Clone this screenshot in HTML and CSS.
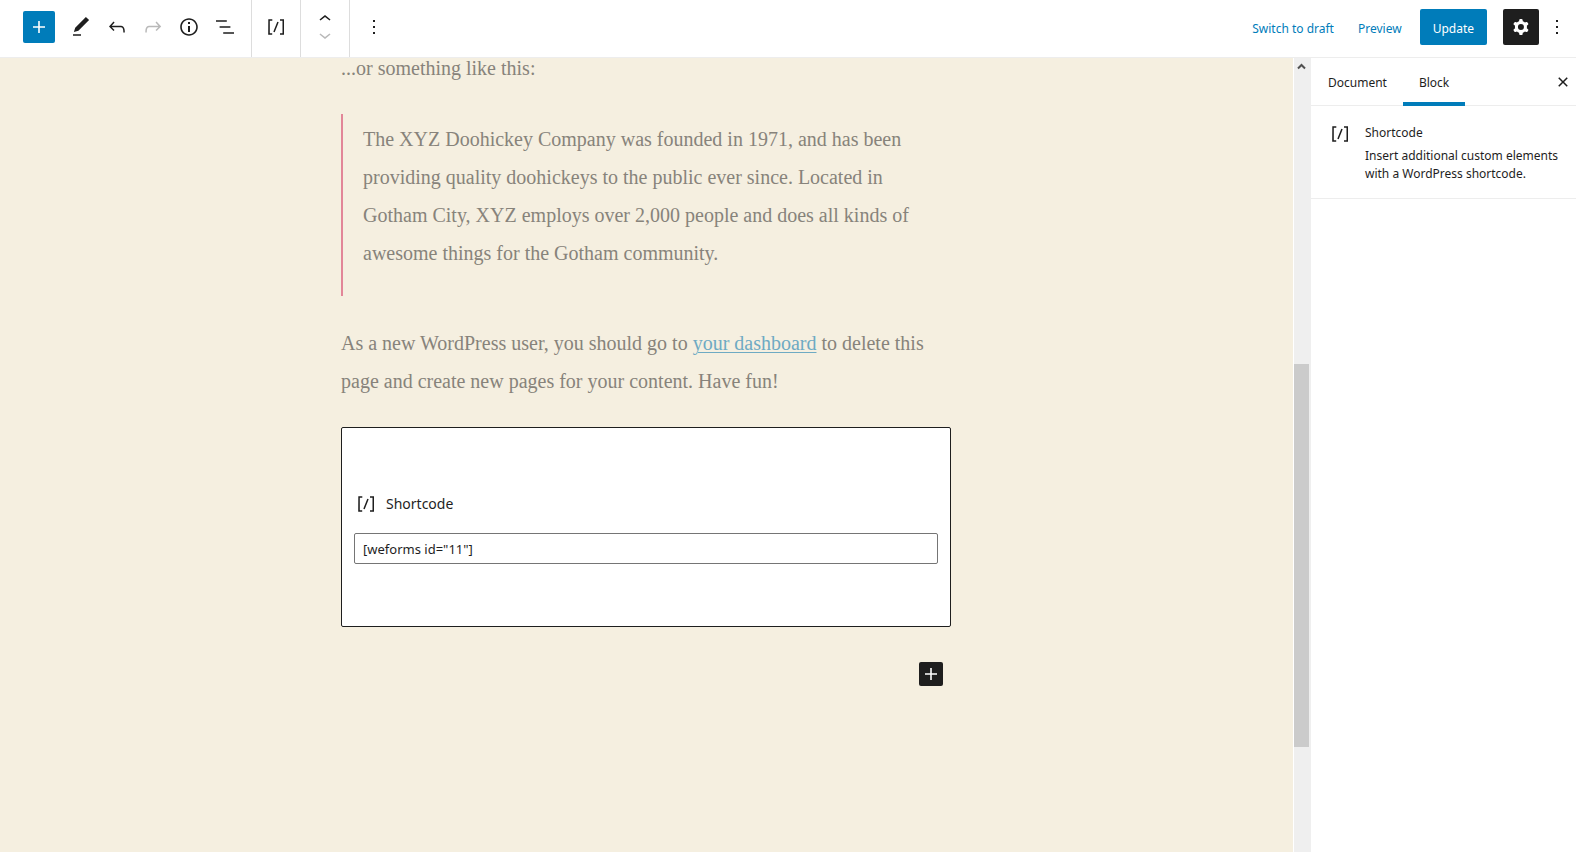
FILE: index.html
```html
<!DOCTYPE html>
<html lang="en">
<head>
<meta charset="utf-8">
<title>Edit Page</title>
<link rel="stylesheet" href="styles.css">
</head>
<body>
<svg class="sprite" aria-hidden="true">
  <symbol id="plus" viewBox="0 0 24 24"><path d="M18 11.2h-5.2V6h-1.6v5.2H6v1.6h5.2V18h1.6v-5.2H18z"/></symbol>
  <symbol id="shortcode" viewBox="0 0 24 24"><path d="M16 4.2v1.5h2.5v12.5H16v1.5h4V4.2h-4zM4.2 19.8h4v-1.5H5.8V5.8h2.5V4.2h-4l-.1 15.6zm5.1-3.1l1.4.6 4-10-1.4-.6-4 10z"/></symbol>
  <symbol id="more" viewBox="0 0 24 24"><path d="M13 19h-2v-2h2v2zm0-6h-2v-2h2v2zm0-6h-2V5h2v2z"/></symbol>
</svg>
<header class="header">
  <div class="tools">
    <button class="inserter" aria-label="Add block"><svg class="icon"><use href="#plus"/></svg></button>
    <div class="tool-group">
      <button class="tool" aria-label="Modes"><svg class="icon" viewBox="0 0 24 24"><path d="M20.1 5.1L16.9 2 6.2 12.7l-1.3 4.4 4.5-1.3L20.1 5.1zM4 20.8h8v-1.5H4v1.5z"/></svg></button>
      <button class="tool" aria-label="Undo"><svg class="icon" viewBox="0 0 24 24"><path d="M18.3 11.7c-.6-.6-1.4-.9-2.3-.9H6.7l2.9-3.3-1.1-1-4.5 5L8.5 16l1-1-2.7-2.7H16c.5 0 .9.2 1.3.5 1 1 1 3.4 1 4.5v.3h1.5v-.2c0-1.5 0-4.3-1.5-5.7z"/></svg></button>
      <button class="tool" aria-label="Redo" disabled><svg class="icon" viewBox="0 0 24 24"><path d="M15.6 6.5l-1.1 1 2.9 3.3H8c-.9 0-1.7.3-2.3.9-1.4 1.5-1.4 4.2-1.4 5.6v.2h1.5v-.3c0-1.1 0-3.5 1-4.5.3-.3.7-.5 1.3-.5h9.2L14.5 15l1.1 1.1 4.6-4.6-4.6-5z"/></svg></button>
      <button class="tool" aria-label="Content structure"><svg class="icon" viewBox="0 0 24 24"><path d="M12 3.2c-4.8 0-8.8 3.9-8.8 8.8 0 4.8 3.9 8.8 8.8 8.8 4.8 0 8.8-3.9 8.8-8.8 0-4.8-4-8.8-8.8-8.8zm0 16c-4 0-7.2-3.3-7.2-7.2C4.8 8 8 4.8 12 4.8s7.2 3.3 7.2 7.2c0 4-3.2 7.2-7.2 7.2zM11 17h2v-6h-2v6zm0-8h2V7h-2v2z"/></svg></button>
      <button class="tool" aria-label="Block navigation"><svg class="icon" viewBox="0 0 24 24"><path d="M13.8 5.2H3v1.5h10.8V5.2zm-3.6 12v1.5H21v-1.5H10.2zm7.2-6H6.6v1.5h10.8v-1.5z"/></svg></button>
    </div>
    <div class="block-toolbar">
      <div class="segment"><button class="tool" aria-label="Shortcode"><svg class="icon"><use href="#shortcode"/></svg></button></div>
      <div class="segment movers">
        <button class="mover" aria-label="Move up"><svg class="icon" viewBox="0 0 24 24"><path d="M6.5 12.4L12 8l5.5 4.4-.9 1.2L12 10l-4.500 3.600-1-1.200z"/></svg></button>
        <button class="mover" aria-label="Move down" disabled><svg class="icon" viewBox="0 0 24 24"><path d="M17.5 11.6L12 16l-5.5-4.4.9-1.2L12 14l4.5-3.6 1 1.2z"/></svg></button>
      </div>
      <div class="segment"><button class="tool" aria-label="More options"><svg class="icon"><use href="#more"/></svg></button></div>
    </div>
  </div>
  <div class="actions">
    <button class="text-button">Switch to draft</button>
    <button class="text-button">Preview</button>
    <button class="update">Update</button>
    <div class="end-tools">
      <button class="settings" aria-label="Settings"><svg class="icon" viewBox="0 0 24 24"><path fill-rule="evenodd" d="M10.289 4.836A1 1 0 0111.275 4h1.306a1 1 0 01.987.836l.244 1.466c.787.26 1.503.679 2.108 1.218l1.393-.522a1 1 0 011.216.437l.653 1.13a1 1 0 01-.23 1.273l-1.148.944a6.025 6.025 0 010 2.435l1.149.946a1 1 0 01.23 1.272l-.653 1.13a1 1 0 01-1.216.437l-1.394-.522c-.605.54-1.32.958-2.108 1.218l-.244 1.466a1 1 0 01-.987.836h-1.306a1 1 0 01-.986-.836l-.244-1.466a5.995 5.995 0 01-2.108-1.218l-1.394.522a1 1 0 01-1.217-.436l-.653-1.131a1 1 0 01.23-1.272l1.149-.946a6.026 6.026 0 010-2.435l-1.148-.944a1 1 0 01-.23-1.272l.653-1.131a1 1 0 011.217-.437l1.393.522a5.994 5.994 0 012.108-1.218l.244-1.466zM14.929 12a3 3 0 11-6 0 3 3 0 016 0z"/></svg></button>
      <button class="tool" aria-label="More tools"><svg class="icon"><use href="#more"/></svg></button>
    </div>
  </div>
</header>
<div class="workspace">
  <main class="canvas">
    <div class="content">
      <p class="paragraph lead">...or something like this:</p>
      <blockquote class="quote">The XYZ Doohickey Company was founded in 1971, and has been<br>providing quality doohickeys to the public ever since. Located in<br>Gotham City, XYZ employs over 2,000 people and does all kinds of<br>awesome things for the Gotham community.</blockquote>
      <p class="paragraph">As a new WordPress user, you should go to <a class="link" href="#dashboard">your dashboard</a> to delete this<br>page and create new pages for your content. Have fun!</p>
      <section class="shortcode-block">
        <label class="shortcode-label" for="code"><svg class="icon"><use href="#shortcode"/></svg>Shortcode</label>
        <input class="shortcode-input" id="code" type="text" value='[weforms id="11"]'>
      </section>
      <div class="appender"><button class="append" aria-label="Add block"><svg class="icon"><use href="#plus"/></svg></button></div>
    </div>
  </main>
  <div class="scrollbar" aria-hidden="true">
    <svg class="scroll-arrow" viewBox="0 0 9 7"><path d="M1 5.500L4.500 2L8 5.500" fill="none" stroke="#505050" stroke-width="2"/></svg>
    <div class="scroll-before"></div>
    <div class="scroll-thumb"></div>
    <div class="scroll-after"></div>
  </div>
  <aside class="sidebar">
    <div class="tabs">
      <button class="tab">Document</button>
      <button class="tab tab-active">Block</button>
      <button class="close" aria-label="Close settings"><svg class="icon" viewBox="0 0 24 24"><path d="M12 13.060l3.712 3.713 1.061-1.060L13.061 12l3.712-3.712-1.060-1.060L12 10.938 8.288 7.227l-1.061 1.060L10.939 12l-3.712 3.712 1.060 1.061L12 13.061z"/></svg></button>
    </div>
    <section class="card">
      <svg class="icon"><use href="#shortcode"/></svg>
      <div class="card-text">
        <h2 class="card-title">Shortcode</h2>
        <p class="card-description">Insert additional custom elements with a WordPress shortcode.</p>
      </div>
    </section>
  </aside>
</div>
</body>
</html>
```
FILE: styles.css
```css
* { box-sizing: border-box; }

body {
  margin: 0;
  height: 100vh;
  display: flex;
  flex-direction: column;
  overflow: hidden;
  background: #fff;
  color: #1e1e1e;
  font: 12px/18px "Noto Sans", sans-serif;
}

button {
  display: flex;
  align-items: center;
  justify-content: center;
  margin: 0;
  padding: 0;
  border: 0;
  border-radius: 2px;
  background: none;
  color: inherit;
  font: inherit;
  white-space: nowrap;
}

button:disabled { color: #b9b9b9; }

.sprite { display: none; }

.icon {
  display: block;
  flex: none;
  width: 24px;
  height: 24px;
  fill: currentColor;
}

.header {
  display: flex;
  justify-content: space-between;
  flex: none;
  height: 58px;
  padding: 0 1px 0 23px;
  border-bottom: 1px solid #ededed;
}

.tools, .tool-group, .block-toolbar, .actions, .end-tools { display: flex; }

.tools { gap: 8px; }
.tool-group { align-items: center; height: 54px; }

.inserter {
  width: 32px;
  height: 32px;
  margin-top: 11px;
  background: #007cba;
  color: #fff;
}

.tool { width: 36px; height: 36px; }

.segment {
  display: flex;
  align-items: center;
  justify-content: center;
  width: 49px;
  padding-bottom: 3px;
  border-left: 1px solid #ddd;
}

.movers { flex-direction: column; }
.mover { width: 36px; height: 16px; }

.actions {
  align-items: center;
  height: 54px;
}

.text-button {
  height: 36px;
  margin-right: 24px;
  padding-top: 4px;
  color: #007cba;
}

.text-button:nth-child(2) { margin-right: 18px; }

.update {
  height: 36px;
  margin-right: 16px;
  padding: 4px 13px 0;
  background: #007cba;
  color: #fff;
}

.settings {
  width: 36px;
  height: 36px;
  background: #1e1e1e;
  color: #fff;
}

.workspace {
  display: flex;
  flex: 1;
  min-height: 0;
}

.canvas {
  flex: 1;
  overflow: hidden;
  padding-right: 1px;
  border-right: 1px solid #fff;
  background: #f5efe0;
}

.content {
  width: 100%;
  max-width: 610px;
  margin: 0 auto;
  color: #87837b;
  font: 20px/38px "Liberation Serif", serif;
}

.paragraph { margin: 0; }
.lead { line-height: 20px; }

.quote {
  margin: 36px 0 28px;
  padding: 6px 0 24px 20px;
  border-left: 2px solid #e28698;
}

.link { color: #6eaac3; text-underline-offset: 2px; text-decoration-thickness: 1px; }

.shortcode-block {
  display: flex;
  flex-direction: column;
  justify-content: center;
  gap: 17px;
  height: 200px;
  margin-top: 27px;
  padding: 1px 12px 0;
  border: 1px solid #1e1e1e;
  border-radius: 2px;
  background: #fff;
  color: #1e1e1e;
  font: 14px/24px "Noto Sans", sans-serif;
}

.shortcode-label { display: flex; gap: 8px; }

.shortcode-input {
  width: 100%;
  height: 31px;
  padding: 2px 8px 0;
  border: 1px solid #757575;
  border-radius: 2px;
  background: #fff;
  color: #1e1e1e;
  font: 13px/18px "Noto Sans", sans-serif;
}

.appender {
  display: flex;
  justify-content: flex-end;
  padding: 35px 8px 0 0;
}

.append {
  width: 24px;
  height: 24px;
  background: #1e1e1e;
  color: #fff;
}

.scrollbar {
  display: flex;
  flex-direction: column;
  flex: none;
  width: 17px;
  background: #efefef;
}

.scroll-arrow { width: 9px; height: 7px; margin: 5px 3px; }
.scroll-before { flex: 289; }
.scroll-thumb { flex: 383; width: 15px; background: #cbcbcb; }
.scroll-after { flex: 105; }

.sidebar { flex: none; width: 265px; }

.tabs {
  display: flex;
  height: 48px;
  padding: 0 1px;
  border-bottom: 1px solid #ededed;
}

.tab {
  height: 48px;
  padding: 2px 16px 0;
  border-radius: 0;
}

.tab-active { box-shadow: inset 0 -4px #007cba; }
.close { width: 24px; margin-left: auto; }

.card {
  display: flex;
  gap: 13px;
  padding: 16px 12px 15px 17px;
  border-bottom: 1px solid #ededed;
}

.card-text { padding-top: 2px; }
.card-title { margin: 0 0 5px; font: inherit; }
.card-description { margin: 0; }
```
